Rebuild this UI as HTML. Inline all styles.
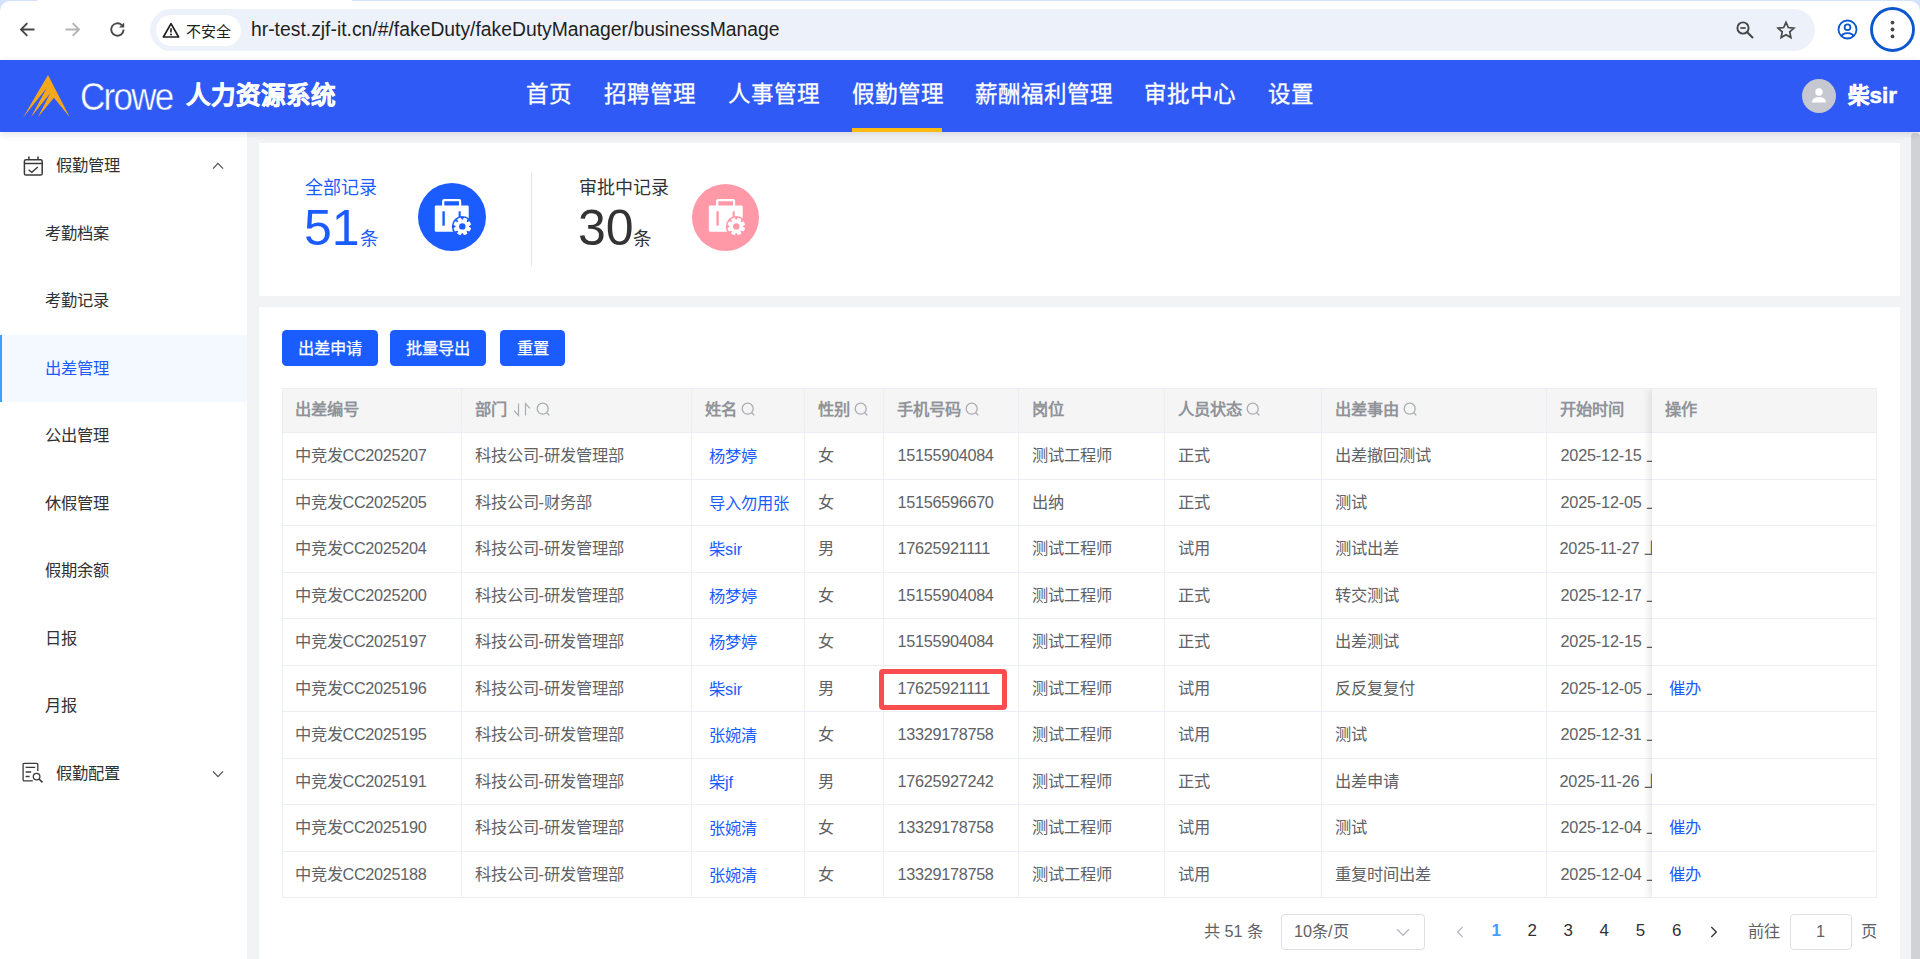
<!DOCTYPE html>
<html lang="zh-CN">
<head>
<meta charset="utf-8">
<title>人力资源系统</title>
<style>
*{box-sizing:border-box;margin:0;padding:0}
html,body{width:1920px;height:959px;overflow:hidden}
body{position:relative;background:#f2f3f5;font-family:"Liberation Sans",sans-serif;font-size:16.25px;color:#606266}
.abs{position:absolute}
svg{position:absolute;overflow:visible}
/* browser chrome */
#chrome{position:absolute;left:0;top:0;width:1920px;height:60px;background:#fff}
#omni{position:absolute;left:150px;top:9px;width:1665px;height:42px;border-radius:21px;background:#edf1fa}
#chip{position:absolute;left:156px;top:14.5px;width:85px;height:31px;border-radius:15.5px;background:#fff}
#chiptxt{position:absolute;left:186px;top:20.500px;font-size:15px;line-height:22px;color:#1f1f1f;white-space:nowrap}
#url{position:absolute;left:251px;top:17px;font-size:19.330px;line-height:26px;color:#1f1f1f;white-space:nowrap}
/* header */
#hdr{position:absolute;left:0;top:60px;width:1920px;height:72px;background:#2f5af5;box-shadow:0 2px 7px rgba(0,21,41,.13);z-index:5}
#crowe{position:absolute;left:80px;top:16.500px;font-size:35px;line-height:42px;color:#fff;letter-spacing:-1.700px;white-space:nowrap;-webkit-text-stroke:.4px #2f5af5;transform:scaleY(1.09);transform-origin:0 33px}
#sys{position:absolute;left:185.500px;top:19px;font-size:24.600px;line-height:34px;font-weight:bold;color:#fff;white-space:nowrap;-webkit-text-stroke:.5px #fff}
.nav{position:absolute;top:18px;font-size:22.500px;line-height:34px;color:#fff;white-space:nowrap;-webkit-text-stroke:.3px #fff}
#navline{position:absolute;left:852px;top:68px;width:90px;height:4px;background:#fcb813}
#avatar{position:absolute;left:1802px;top:19px;width:34px;height:34px;border-radius:50%;background:#c5c8d1}
#uname{position:absolute;left:1847.500px;top:19px;font-size:22.500px;line-height:34px;font-weight:bold;color:#fff;white-space:nowrap;-webkit-text-stroke:.5px #fff}
/* sidebar */
#side{position:absolute;left:0;top:132px;width:247px;height:827px;background:#fff}
.mi{position:absolute;left:0;width:247px;height:67.5px;line-height:67.5px;font-size:16.25px;color:#303133;white-space:nowrap}
.mi.top{padding-left:56px}
.mi.sub{padding-left:45px}
.mi.act{background:#f4f8ff;color:#1a5cff;border-left:2px solid #409eff;padding-left:43px}
/* cards */
#card1{position:absolute;left:259px;top:143px;width:1641px;height:153px;background:#fff}
#card2{position:absolute;left:259px;top:307px;width:1641px;height:660px;background:#fff}
#sbar{position:absolute;left:1911px;top:133px;width:9px;height:830px;background:#d1d2d5;border-radius:3.500px 3.500px 0 0}
.st-t{position:absolute;font-size:18px;line-height:26px;white-space:nowrap}
.st-n{position:absolute;font-size:50px;line-height:56px;white-space:nowrap}
.st-u{position:absolute;font-size:18.600px;line-height:26px;white-space:nowrap;margin-top:1px}
.circ{position:absolute;width:68px;height:68px;border-radius:50%}
.btn{position:absolute;top:330px;height:36px;line-height:36px;border-radius:4.500px;background:#1a5cff;color:#fff;font-size:16.25px;font-weight:500;text-align:center;white-space:nowrap;-webkit-text-stroke:.25px #fff}
/* table */
#tbl{position:absolute;left:282px;top:388px;width:1595px;height:510px;border:1px solid #ebeef5;border-bottom:0;background:#fff;overflow:hidden}
.row{position:absolute;left:0;width:1595px;border-bottom:1px solid #ebeef5}
.hd{background:#f5f5f5;color:#909399;font-weight:bold}
.c{position:absolute;top:0;height:100%;border-right:1px solid #ebeef5;padding-left:11.5px;white-space:nowrap;overflow:hidden}
.c i{font-style:normal;letter-spacing:-.3px}
.lk{color:#1a5cff}
.c.nm{padding-left:17px;padding-top:1px}
.hd .c{margin-top:-1.5px}
#fix{position:absolute;left:1652px;top:389px;width:224px;height:509px;background:#fff;box-shadow:-3px 0 7px rgba(0,0,0,.095);clip-path:inset(0 0 0 -12px)}
#fix .row{width:224px}
#red{position:absolute;left:878.500px;top:669px;width:128px;height:41px;border:5px solid #f94d50;border-radius:4px}
/* pagination */
.pg{position:absolute;top:919px;line-height:24px;font-size:16.25px;white-space:nowrap}
.pn{position:absolute;top:919px;width:36px;margin-left:-18px;text-align:center;line-height:24px;font-size:16.900px;color:#303133}
.box{position:absolute;top:914px;height:35.500px;border:1px solid #dcdfe6;border-radius:4px;background:#fff}
</style>
</head>
<body>
<div id="chrome">
<div class="abs" style="left:0;top:0;width:1920px;height:12px;background:#d3e3fd"></div>
<div class="abs" style="left:0;top:1px;width:1920px;height:20px;background:#fff;border-radius:10px 10px 0 0"></div>
<div class="abs" style="left:37px;top:0;width:315px;height:2px;background:#fff"></div>
<div id="omni"></div><div id="chip"></div>
<svg style="left:19px;top:21px" width="17" height="17" viewBox="0 0 17 17"><path d="M15.5 8.5H2.2M8.3 2.2 2 8.5l6.3 6.3" fill="none" stroke="#474747" stroke-width="1.9"/></svg>
<svg style="left:64px;top:21px" width="17" height="17" viewBox="0 0 17 17"><path d="M1.5 8.5h13.3M8.7 2.2 15 8.5l-6.3 6.3" fill="none" stroke="#b4b4b4" stroke-width="1.9"/></svg>
<svg style="left:109px;top:21px" width="17" height="17" viewBox="0 0 17 17"><path d="M14.6 8.6a6.2 6.2 0 1 1-1.9-4.6" fill="none" stroke="#474747" stroke-width="1.9"/><path d="M15.2 1.4v5.2H10z" fill="#474747"/></svg>
<svg style="left:162px;top:21.500px" width="18" height="16" viewBox="0 0 18 16"><path d="M9 1.6 16.6 15H1.4z" fill="none" stroke="#1f1f1f" stroke-width="1.7" stroke-linejoin="round"/><path d="M9 6.2v4.3" stroke="#1f1f1f" stroke-width="1.6"/><circle cx="9" cy="12.4" r="1" fill="#1f1f1f"/></svg>
<div id="chiptxt">不安全</div>
<div id="url">hr-test.zjf-it.cn/#/fakeDuty/fakeDutyManager/businessManage</div>
<svg style="left:1735px;top:20px" width="20" height="20" viewBox="0 0 20 20"><circle cx="8" cy="8" r="5.6" fill="none" stroke="#474747" stroke-width="1.9"/><path d="M12.2 12.2 18 18" stroke="#474747" stroke-width="2"/><path d="M5.3 8h5.4" stroke="#474747" stroke-width="1.7"/></svg>
<svg style="left:1775.500px;top:20px" width="20" height="20" viewBox="0 0 24 24"><path d="M12 2.8l2.8 6.2 6.7.7-5 4.6 1.4 6.7-5.9-3.4-5.9 3.4 1.4-6.7-5-4.6 6.7-.7z" fill="none" stroke="#474747" stroke-width="2" stroke-linejoin="miter"/></svg>
<svg style="left:1837px;top:19px" width="21" height="21" viewBox="0 0 21 21"><defs><clipPath id="pc"><circle cx="10.5" cy="10.5" r="8.6"/></clipPath></defs><circle cx="10.5" cy="10.5" r="9" fill="none" stroke="#0b57d0" stroke-width="1.8"/><circle cx="10.5" cy="8.3" r="2.9" fill="none" stroke="#0b57d0" stroke-width="1.8"/><ellipse cx="10.5" cy="18.2" rx="6.4" ry="4" fill="none" stroke="#0b57d0" stroke-width="1.8" clip-path="url(#pc)"/></svg>
<svg style="left:1870px;top:7px" width="45" height="45" viewBox="0 0 45 45"><circle cx="22.5" cy="22.5" r="21" fill="none" stroke="#0b57d0" stroke-width="2.9"/><circle cx="22.5" cy="15.6" r="1.9" fill="#474747"/><circle cx="22.5" cy="22.5" r="1.9" fill="#474747"/><circle cx="22.5" cy="29.4" r="1.9" fill="#474747"/></svg>
</div>
<div id="hdr">
<svg style="left:23px;top:15px" width="48" height="42" viewBox="0 0 48 42"><path d="M25 0 46.800 42.300 30.900 22.800 14.800 42.300 27.400 18.100 7.900 42.300 23.700 13 .2 42.300z" fill="#f5a81c"/></svg>
<div id="crowe">Crowe</div>
<div id="sys">人力资源系统</div>
<div class="nav" style="left:526px">首页</div>
<div class="nav" style="left:604px">招聘管理</div>
<div class="nav" style="left:728px">人事管理</div>
<div class="nav" style="left:852px">假勤管理</div>
<div class="nav" style="left:975px">薪酬福利管理</div>
<div class="nav" style="left:1144px">审批中心</div>
<div class="nav" style="left:1268px">设置</div>
<div id="navline"></div>
<div id="avatar"><svg style="left:9px;top:8px" width="16" height="17" viewBox="0 0 16 17"><circle cx="8" cy="5" r="3.7" fill="#fff"/><path d="M1 15.5c0-3.6 2.4-5.3 7-5.3s7 1.700 7 5.300z" fill="#fff"/></svg></div>
<div id="uname"><span style="font-size:21.500px">柴</span>sir</div>
</div>
<div id="side">
<div class="mi top" style="top:0">假勤管理</div>
<svg style="left:23px;top:24px" width="21" height="21" viewBox="0 0 21 21"><rect x="1.4" y="3.7" width="17.8" height="15.4" rx="1.6" fill="none" stroke="#3a3a3a" stroke-width="1.5"/><path d="M1.4 7.6h17.8M5.9 .6v3.200M15 .6v3.200" stroke="#3a3a3a" stroke-width="1.5" fill="none"/><path d="M5.600 13.700l3.200 2.600 6-5.400" stroke="#3a3a3a" stroke-width="1.4" fill="none"/></svg>
<svg style="left:212px;top:30px" width="12" height="8" viewBox="0 0 12 8"><path d="M1 6.600 6 1.400l5 5.200" fill="none" stroke="#505255" stroke-width="1.3"/></svg>
<div class="mi sub" style="top:67.50px">考勤档案</div>
<div class="mi sub" style="top:135.00px">考勤记录</div>
<div class="mi sub act" style="top:202.50px">出差管理</div>
<div class="mi sub" style="top:270.00px">公出管理</div>
<div class="mi sub" style="top:337.50px">休假管理</div>
<div class="mi sub" style="top:405.00px">假期余额</div>
<div class="mi sub" style="top:472.50px">日报</div>
<div class="mi sub" style="top:540.00px">月报</div>
<div class="mi top" style="top:607.50px">假勤配置</div>
<svg style="left:22px;top:630px" width="22" height="21" viewBox="0 0 22 21"><path d="M15.800 9V2.500a1.200 1.200 0 0 0-1.200-1.200H2.300a1.200 1.200 0 0 0-1.200 1.200v15.200a1.200 1.200 0 0 0 1.200 1.200h8.500" fill="none" stroke="#3a3a3a" stroke-width="1.3"/><path d="M3.600 5.300h9.600M3.600 10h5.600M3.600 14.500h4" stroke="#3a3a3a" stroke-width="1.3"/><circle cx="14.600" cy="14.600" r="3.300" fill="none" stroke="#3a3a3a" stroke-width="1.3"/><path d="M17 17l3.500 3.400" stroke="#3a3a3a" stroke-width="1.6"/></svg>
<svg style="left:212px;top:638px" width="12" height="8" viewBox="0 0 12 8"><path d="M1 1.400 6 6.600l5-5.200" fill="none" stroke="#505255" stroke-width="1.3"/></svg>
</div>
<div id="card1"></div><div id="card2"></div><div id="sbar"></div>
<div class="st-t" style="left:305px;top:175px;color:#1a5cff">全部记录</div>
<div class="st-n" style="left:304px;top:200px;color:#1a5cff">51</div>
<div class="st-u" style="left:360px;top:225px;color:#1a5cff">条</div>
<div class="circ" style="left:418px;top:183px;background:#1a5cff"><svg style="left:16px;top:16px" width="38" height="38" viewBox="0 0 38 38"><path d="M8.100 7V2.100a2 2 0 0 1 2-2h15.100a2 2 0 0 1 2 2V7h-2.200V2.300H10.300V7z" fill="#fff"/><rect x=".8" y="6.600" width="33.900" height="26.100" rx="1.200" fill="#fff"/><rect x="8.400" y="12.300" width="2.400" height="14.400" fill="#1a5cff"/><rect x="24.600" y="12.300" width="2.100" height="6" fill="#1a5cff"/><circle cx="28.3" cy="27.4" r="10.500" fill="#1a5cff"/><path d="M29.07 21.15L30.07 19.09L32.93 20.27L32.18 22.44L33.26 23.52L35.43 22.77L36.61 25.63L34.55 26.63L34.55 28.17L36.61 29.17L35.43 32.03L33.26 31.28L32.18 32.36L32.93 34.53L30.07 35.71L29.07 33.65L27.53 33.65L26.53 35.71L23.67 34.53L24.42 32.36L23.34 31.28L21.17 32.03L19.99 29.17L22.05 28.17L22.05 26.63L19.99 25.63L21.17 22.77L23.34 23.52L24.42 22.44L23.67 20.27L26.53 19.09L27.53 21.15z" fill="#fff" stroke="#fff" stroke-width="1" stroke-linejoin="round"/><circle cx="28.3" cy="27.4" r="3.200" fill="#1a5cff"/></svg></div>
<div class="abs" style="left:531px;top:173px;width:1px;height:93px;background:#e4e7ed"></div>
<div class="st-t" style="left:579px;top:175px;color:#333">审批中记录</div>
<div class="st-n" style="left:578px;top:200px;color:#333">30</div>
<div class="st-u" style="left:633px;top:225px;color:#333">条</div>
<div class="circ" style="left:692px;top:183.500px;width:67px;height:67px;background:#ff99a8"><svg style="left:15.500px;top:15.500px" width="38" height="38" viewBox="0 0 38 38"><path d="M8.100 7V2.100a2 2 0 0 1 2-2h15.100a2 2 0 0 1 2 2V7h-2.200V2.300H10.300V7z" fill="#fff"/><rect x=".8" y="6.600" width="33.900" height="26.100" rx="1.200" fill="#fff"/><rect x="8.400" y="12.300" width="2.400" height="14.400" fill="#ff99a8"/><rect x="24.600" y="12.300" width="2.100" height="6" fill="#ff99a8"/><circle cx="28.3" cy="27.4" r="10.500" fill="#ff99a8"/><path d="M29.07 21.15L30.07 19.09L32.93 20.27L32.18 22.44L33.26 23.52L35.43 22.77L36.61 25.63L34.55 26.63L34.55 28.17L36.61 29.17L35.43 32.03L33.26 31.28L32.18 32.36L32.93 34.53L30.07 35.71L29.07 33.65L27.53 33.65L26.53 35.71L23.67 34.53L24.42 32.36L23.34 31.28L21.17 32.03L19.99 29.17L22.05 28.17L22.05 26.63L19.99 25.63L21.17 22.77L23.34 23.52L24.42 22.44L23.67 20.27L26.53 19.09L27.53 21.15z" fill="#fff" stroke="#fff" stroke-width="1" stroke-linejoin="round"/><circle cx="28.3" cy="27.4" r="3.200" fill="#ff99a8"/></svg></div>
<div class="btn" style="left:282px;width:96px">出差申请</div>
<div class="btn" style="left:390px;width:96px">批量导出</div>
<div class="btn" style="left:500px;width:65px">重置</div>
<div id="tbl">
<div class="row hd" style="top:0;height:44.0px;line-height:43.0px"><div class="c" style="left:0.0px;width:178.5px">出差编号</div><div class="c" style="left:178.5px;width:230.5px;padding-left:13px">部门<svg style="position:static;vertical-align:-2px;margin-left:5px" width="21" height="15" viewBox="0 0 21 15"><path d="M6.500 1.500v12l-4.500-4.800M13.500 13.500v-12l4.500 4.800" fill="none" stroke="#a8abb2" stroke-width="1.200"/></svg><svg style="position:static;vertical-align:-2px;margin-left:3px" width="15" height="15" viewBox="0 0 15 15"><circle cx="6.700" cy="6.700" r="5.500" fill="none" stroke="#a8abb2" stroke-width="1.250"/><path d="M10.700 10.700l2.700 2.700" stroke="#a8abb2" stroke-width="1.250"/></svg></div><div class="c" style="left:409.0px;width:113.0px;padding-left:13px">姓名<svg style="position:static;vertical-align:-2px;margin-left:4px" width="15" height="15" viewBox="0 0 15 15"><circle cx="6.700" cy="6.700" r="5.500" fill="none" stroke="#a8abb2" stroke-width="1.250"/><path d="M10.700 10.700l2.700 2.700" stroke="#a8abb2" stroke-width="1.250"/></svg></div><div class="c" style="left:522.0px;width:79.0px;padding-left:13px">性别<svg style="position:static;vertical-align:-2px;margin-left:4px" width="15" height="15" viewBox="0 0 15 15"><circle cx="6.700" cy="6.700" r="5.500" fill="none" stroke="#a8abb2" stroke-width="1.250"/><path d="M10.700 10.700l2.700 2.700" stroke="#a8abb2" stroke-width="1.250"/></svg></div><div class="c" style="left:601.0px;width:135.0px;padding-left:13px">手机号码<svg style="position:static;vertical-align:-2px;margin-left:4px" width="15" height="15" viewBox="0 0 15 15"><circle cx="6.700" cy="6.700" r="5.500" fill="none" stroke="#a8abb2" stroke-width="1.250"/><path d="M10.700 10.700l2.700 2.700" stroke="#a8abb2" stroke-width="1.250"/></svg></div><div class="c" style="left:736.0px;width:146.0px;padding-left:13px">岗位</div><div class="c" style="left:882.0px;width:157.0px;padding-left:13px">人员状态<svg style="position:static;vertical-align:-2px;margin-left:4px" width="15" height="15" viewBox="0 0 15 15"><circle cx="6.700" cy="6.700" r="5.500" fill="none" stroke="#a8abb2" stroke-width="1.250"/><path d="M10.700 10.700l2.700 2.700" stroke="#a8abb2" stroke-width="1.250"/></svg></div><div class="c" style="left:1039.0px;width:225.0px;padding-left:13px">出差事由<svg style="position:static;vertical-align:-2px;margin-left:4px" width="15" height="15" viewBox="0 0 15 15"><circle cx="6.700" cy="6.700" r="5.500" fill="none" stroke="#a8abb2" stroke-width="1.250"/><path d="M10.700 10.700l2.700 2.700" stroke="#a8abb2" stroke-width="1.250"/></svg></div><div class="c" style="left:1264.0px;width:153.5px;padding-left:13px">开始时间</div></div>
<div class="row" style="top:44.00px;height:46.50px;line-height:45.50px"><div class="c" style="left:0.0px;width:178.5px">中竞发<i>CC2025207</i></div><div class="c" style="left:178.5px;width:230.5px;padding-left:13px">科技公司-研发管理部</div><div class="c nm lk" style="left:409.0px;width:113.0px">杨梦婷</div><div class="c" style="left:522.0px;width:79.0px;padding-left:12.5px">女</div><div class="c" style="left:601.0px;width:135.0px;padding-left:13.5px"><i>15155904084</i></div><div class="c" style="left:736.0px;width:146.0px;padding-left:12.5px">测试工程师</div><div class="c" style="left:882.0px;width:157.0px;padding-left:12.5px">正式</div><div class="c" style="left:1039.0px;width:225.0px;padding-left:12.5px">出差撤回测试</div><div class="c" style="left:1264.0px;width:153.5px;padding-left:13.5px"><i style="letter-spacing:-.2px">2025-12-15</i> 上午</div></div>
<div class="row" style="top:90.50px;height:46.50px;line-height:45.50px"><div class="c" style="left:0.0px;width:178.5px">中竞发<i>CC2025205</i></div><div class="c" style="left:178.5px;width:230.5px;padding-left:13px">科技公司-财务部</div><div class="c nm lk" style="left:409.0px;width:113.0px">导入勿用张</div><div class="c" style="left:522.0px;width:79.0px;padding-left:12.5px">女</div><div class="c" style="left:601.0px;width:135.0px;padding-left:13.5px"><i>15156596670</i></div><div class="c" style="left:736.0px;width:146.0px;padding-left:12.5px">出纳</div><div class="c" style="left:882.0px;width:157.0px;padding-left:12.5px">正式</div><div class="c" style="left:1039.0px;width:225.0px;padding-left:12.5px">测试</div><div class="c" style="left:1264.0px;width:153.5px;padding-left:13.5px"><i style="letter-spacing:-.2px">2025-12-05</i> 上午</div></div>
<div class="row" style="top:137.00px;height:46.50px;line-height:45.50px"><div class="c" style="left:0.0px;width:178.5px">中竞发<i>CC2025204</i></div><div class="c" style="left:178.5px;width:230.5px;padding-left:13px">科技公司-研发管理部</div><div class="c nm lk" style="left:409.0px;width:113.0px">柴sir</div><div class="c" style="left:522.0px;width:79.0px;padding-left:12.5px">男</div><div class="c" style="left:601.0px;width:135.0px;padding-left:13.5px"><i>17625921111</i></div><div class="c" style="left:736.0px;width:146.0px;padding-left:12.5px">测试工程师</div><div class="c" style="left:882.0px;width:157.0px;padding-left:12.5px">试用</div><div class="c" style="left:1039.0px;width:225.0px;padding-left:12.5px">测试出差</div><div class="c" style="left:1264.0px;width:153.5px;padding-left:12.5px"><i style="letter-spacing:-.2px">2025-11-27</i> 上午</div></div>
<div class="row" style="top:183.50px;height:46.50px;line-height:45.50px"><div class="c" style="left:0.0px;width:178.5px">中竞发<i>CC2025200</i></div><div class="c" style="left:178.5px;width:230.5px;padding-left:13px">科技公司-研发管理部</div><div class="c nm lk" style="left:409.0px;width:113.0px">杨梦婷</div><div class="c" style="left:522.0px;width:79.0px;padding-left:12.5px">女</div><div class="c" style="left:601.0px;width:135.0px;padding-left:13.5px"><i>15155904084</i></div><div class="c" style="left:736.0px;width:146.0px;padding-left:12.5px">测试工程师</div><div class="c" style="left:882.0px;width:157.0px;padding-left:12.5px">正式</div><div class="c" style="left:1039.0px;width:225.0px;padding-left:12.5px">转交测试</div><div class="c" style="left:1264.0px;width:153.5px;padding-left:13.5px"><i style="letter-spacing:-.2px">2025-12-17</i> 上午</div></div>
<div class="row" style="top:230.00px;height:46.50px;line-height:45.50px"><div class="c" style="left:0.0px;width:178.5px">中竞发<i>CC2025197</i></div><div class="c" style="left:178.5px;width:230.5px;padding-left:13px">科技公司-研发管理部</div><div class="c nm lk" style="left:409.0px;width:113.0px">杨梦婷</div><div class="c" style="left:522.0px;width:79.0px;padding-left:12.5px">女</div><div class="c" style="left:601.0px;width:135.0px;padding-left:13.5px"><i>15155904084</i></div><div class="c" style="left:736.0px;width:146.0px;padding-left:12.5px">测试工程师</div><div class="c" style="left:882.0px;width:157.0px;padding-left:12.5px">正式</div><div class="c" style="left:1039.0px;width:225.0px;padding-left:12.5px">出差测试</div><div class="c" style="left:1264.0px;width:153.5px;padding-left:13.5px"><i style="letter-spacing:-.2px">2025-12-15</i> 上午</div></div>
<div class="row" style="top:276.50px;height:46.50px;line-height:45.50px"><div class="c" style="left:0.0px;width:178.5px">中竞发<i>CC2025196</i></div><div class="c" style="left:178.5px;width:230.5px;padding-left:13px">科技公司-研发管理部</div><div class="c nm lk" style="left:409.0px;width:113.0px">柴sir</div><div class="c" style="left:522.0px;width:79.0px;padding-left:12.5px">男</div><div class="c" style="left:601.0px;width:135.0px;padding-left:13.5px"><i>17625921111</i></div><div class="c" style="left:736.0px;width:146.0px;padding-left:12.5px">测试工程师</div><div class="c" style="left:882.0px;width:157.0px;padding-left:12.5px">试用</div><div class="c" style="left:1039.0px;width:225.0px;padding-left:12.5px">反反复复付</div><div class="c" style="left:1264.0px;width:153.5px;padding-left:13.5px"><i style="letter-spacing:-.2px">2025-12-05</i> 上午</div></div>
<div class="row" style="top:323.00px;height:46.50px;line-height:45.50px"><div class="c" style="left:0.0px;width:178.5px">中竞发<i>CC2025195</i></div><div class="c" style="left:178.5px;width:230.5px;padding-left:13px">科技公司-研发管理部</div><div class="c nm lk" style="left:409.0px;width:113.0px">张婉清</div><div class="c" style="left:522.0px;width:79.0px;padding-left:12.5px">女</div><div class="c" style="left:601.0px;width:135.0px;padding-left:13.5px"><i>13329178758</i></div><div class="c" style="left:736.0px;width:146.0px;padding-left:12.5px">测试工程师</div><div class="c" style="left:882.0px;width:157.0px;padding-left:12.5px">试用</div><div class="c" style="left:1039.0px;width:225.0px;padding-left:12.5px">测试</div><div class="c" style="left:1264.0px;width:153.5px;padding-left:13.5px"><i style="letter-spacing:-.2px">2025-12-31</i> 上午</div></div>
<div class="row" style="top:369.50px;height:46.50px;line-height:45.50px"><div class="c" style="left:0.0px;width:178.5px">中竞发<i>CC2025191</i></div><div class="c" style="left:178.5px;width:230.5px;padding-left:13px">科技公司-研发管理部</div><div class="c nm lk" style="left:409.0px;width:113.0px">柴jf</div><div class="c" style="left:522.0px;width:79.0px;padding-left:12.5px">男</div><div class="c" style="left:601.0px;width:135.0px;padding-left:13.5px"><i>17625927242</i></div><div class="c" style="left:736.0px;width:146.0px;padding-left:12.5px">测试工程师</div><div class="c" style="left:882.0px;width:157.0px;padding-left:12.5px">正式</div><div class="c" style="left:1039.0px;width:225.0px;padding-left:12.5px">出差申请</div><div class="c" style="left:1264.0px;width:153.5px;padding-left:12.5px"><i style="letter-spacing:-.2px">2025-11-26</i> 上午</div></div>
<div class="row" style="top:416.00px;height:46.50px;line-height:45.50px"><div class="c" style="left:0.0px;width:178.5px">中竞发<i>CC2025190</i></div><div class="c" style="left:178.5px;width:230.5px;padding-left:13px">科技公司-研发管理部</div><div class="c nm lk" style="left:409.0px;width:113.0px">张婉清</div><div class="c" style="left:522.0px;width:79.0px;padding-left:12.5px">女</div><div class="c" style="left:601.0px;width:135.0px;padding-left:13.5px"><i>13329178758</i></div><div class="c" style="left:736.0px;width:146.0px;padding-left:12.5px">测试工程师</div><div class="c" style="left:882.0px;width:157.0px;padding-left:12.5px">试用</div><div class="c" style="left:1039.0px;width:225.0px;padding-left:12.5px">测试</div><div class="c" style="left:1264.0px;width:153.5px;padding-left:13.5px"><i style="letter-spacing:-.2px">2025-12-04</i> 上午</div></div>
<div class="row" style="top:462.50px;height:46.50px;line-height:45.50px"><div class="c" style="left:0.0px;width:178.5px">中竞发<i>CC2025188</i></div><div class="c" style="left:178.5px;width:230.5px;padding-left:13px">科技公司-研发管理部</div><div class="c nm lk" style="left:409.0px;width:113.0px">张婉清</div><div class="c" style="left:522.0px;width:79.0px;padding-left:12.5px">女</div><div class="c" style="left:601.0px;width:135.0px;padding-left:13.5px"><i>13329178758</i></div><div class="c" style="left:736.0px;width:146.0px;padding-left:12.5px">测试工程师</div><div class="c" style="left:882.0px;width:157.0px;padding-left:12.5px">试用</div><div class="c" style="left:1039.0px;width:225.0px;padding-left:12.5px">重复时间出差</div><div class="c" style="left:1264.0px;width:153.5px;padding-left:13.5px"><i style="letter-spacing:-.2px">2025-12-04</i> 上午</div></div>
</div>
<div id="fix">
<div class="row hd" style="top:0;height:44.0px;line-height:43.0px"><div class="c" style="left:0;width:224px;border-right:0;padding-left:12.500px">操作</div></div>
<div class="row" style="top:44.00px;height:46.50px;line-height:45.50px"><div class="c lk" style="left:0;width:224px;border-right:0;padding-left:17px"></div></div>
<div class="row" style="top:90.50px;height:46.50px;line-height:45.50px"><div class="c lk" style="left:0;width:224px;border-right:0;padding-left:17px"></div></div>
<div class="row" style="top:137.00px;height:46.50px;line-height:45.50px"><div class="c lk" style="left:0;width:224px;border-right:0;padding-left:17px"></div></div>
<div class="row" style="top:183.50px;height:46.50px;line-height:45.50px"><div class="c lk" style="left:0;width:224px;border-right:0;padding-left:17px"></div></div>
<div class="row" style="top:230.00px;height:46.50px;line-height:45.50px"><div class="c lk" style="left:0;width:224px;border-right:0;padding-left:17px"></div></div>
<div class="row" style="top:276.50px;height:46.50px;line-height:45.50px"><div class="c lk" style="left:0;width:224px;border-right:0;padding-left:17px">催办</div></div>
<div class="row" style="top:323.00px;height:46.50px;line-height:45.50px"><div class="c lk" style="left:0;width:224px;border-right:0;padding-left:17px"></div></div>
<div class="row" style="top:369.50px;height:46.50px;line-height:45.50px"><div class="c lk" style="left:0;width:224px;border-right:0;padding-left:17px"></div></div>
<div class="row" style="top:416.00px;height:46.50px;line-height:45.50px"><div class="c lk" style="left:0;width:224px;border-right:0;padding-left:17px">催办</div></div>
<div class="row" style="top:462.50px;height:46.50px;line-height:45.50px"><div class="c lk" style="left:0;width:224px;border-right:0;padding-left:17px">催办</div></div>
</div>
<div id="red"></div>
<div class="pg" style="left:1204px">共 51 条</div>
<div class="box" style="left:1281px;width:144px"></div>
<div class="pg" style="left:1294px">10条/页</div>
<svg style="left:1396px;top:928px" width="14" height="9" viewBox="0 0 14 9"><path d="M1 1.300l6 6 6-6" fill="none" stroke="#b4b8c0" stroke-width="1.300"/></svg>
<svg style="left:1456px;top:926px" width="8" height="12" viewBox="0 0 8 12"><path d="M6.700 1 1.700 6l5 5" fill="none" stroke="#b4b8c0" stroke-width="1.300"/></svg>
<div class="pn" style="left:1496.3px;color:#409eff;font-weight:bold">1</div>
<div class="pn" style="left:1532.3px">2</div>
<div class="pn" style="left:1568.3px">3</div>
<div class="pn" style="left:1604.3px">4</div>
<div class="pn" style="left:1640.5px">5</div>
<div class="pn" style="left:1676.6px">6</div>
<svg style="left:1709.500px;top:926px" width="8" height="12" viewBox="0 0 8 12"><path d="M1.300 1 6.300 6l-5 5" fill="none" stroke="#303133" stroke-width="1.300"/></svg>
<div class="pg" style="left:1748px">前往</div>
<div class="box" style="left:1789.500px;width:62px;text-align:center;line-height:32px;font-size:16.25px">1</div>
<div class="pg" style="left:1861px">页</div>
</body>
</html>
